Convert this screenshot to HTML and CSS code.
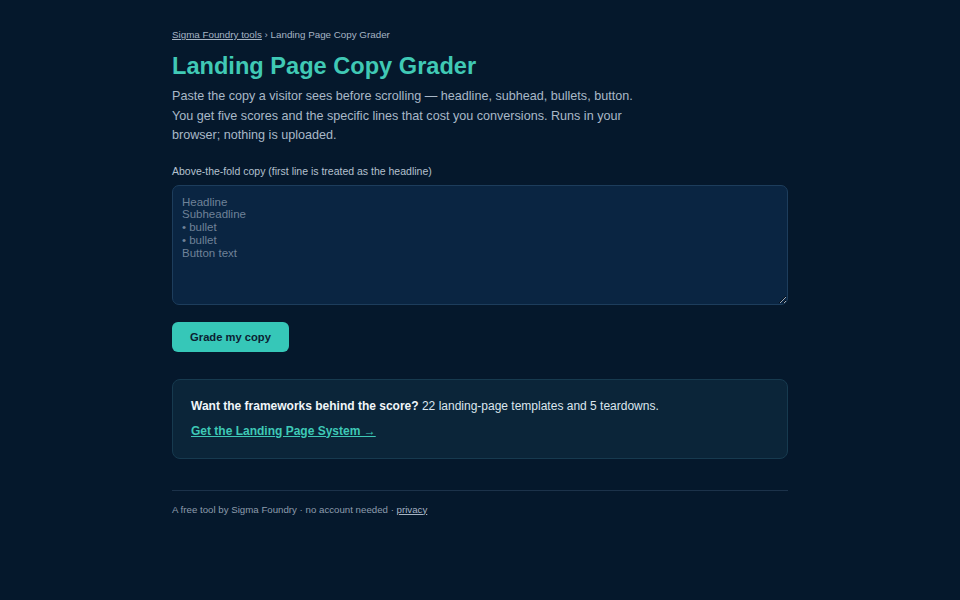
FILE: index.html
```html
<!DOCTYPE html>
<html lang="en">
<head>
<meta charset="utf-8">
<title>Landing Page Copy Grader</title>
<link rel="stylesheet" href="styles.css">
</head>
<body>
<main class="wrap">
  <nav class="crumbs"><a href="#">Sigma Foundry tools</a> › Landing Page Copy Grader</nav>
  <h1 class="title">Landing Page Copy Grader</h1>
  <p class="intro">Paste the copy a visitor sees before scrolling — headline, subhead, bullets, button. You get five scores and the specific lines that cost you conversions. Runs in your browser; nothing is uploaded.</p>
  <label class="label" for="copy">Above-the-fold copy (first line is treated as the headline)</label>
  <textarea id="copy" class="input" placeholder="Headline&#10;Subheadline&#10;• bullet&#10;• bullet&#10;Button text"></textarea>
  <button class="btn" type="button">Grade my copy</button>
  <section class="card">
    <p class="card-text"><strong>Want the frameworks behind the score?</strong> 22 landing-page templates and 5 teardowns.</p>
    <a class="card-link" href="#">Get the Landing Page System →</a>
  </section>
  <footer class="foot">A free tool by Sigma Foundry · no account needed · <a href="#">privacy</a></footer>
</main>
</body>
</html>
```
FILE: styles.css
```css
* { box-sizing: border-box; }
html, body { margin: 0; padding: 0; }
body {
  background: #05182c;
  color: #c9d6e3;
  font-family: "Liberation Sans", Arial, sans-serif;
}
.wrap {
  width: 616px;
  margin: 0 auto;
  padding-top: 28px;
  display: flex;
  flex-direction: column;
  align-items: flex-start;
}
.crumbs {
  font-size: 9.8px;
  color: #a6b4c4;
  line-height: 13px;
}
.crumbs a { color: #a6b4c4; }
.title {
  margin: 10px 0 0;
  font-size: 23.6px;
  line-height: 30px;
  color: #40c9b5;
  font-weight: bold;
}
.intro {
  margin: 6px 0 0;
  max-width: 480px;
  font-size: 12.6px;
  line-height: 19.5px;
  color: #a9b8c8;
}
.label {
  margin-top: 19px;
  font-size: 10.5px;
  line-height: 13px;
  color: #b4c1cf;
}
.input {
  margin-top: 7px;
  width: 100%;
  height: 120px;
  padding: 10px 9px;
  background: #0a2542;
  border: 1px solid #1d3d5c;
  border-radius: 7px;
  color: #c9d6e3;
  font-family: "Liberation Sans", Arial, sans-serif;
  font-size: 11.5px;
  line-height: 12.8px;
  resize: vertical;
}
.input::placeholder { color: #6f8298; }
.btn {
  margin-top: 17px;
  width: 117px;
  height: 30px;
  border: 0;
  border-radius: 6px;
  background: #36c7b8;
  color: #0b2132;
  font-family: "Liberation Sans", Arial, sans-serif;
  font-weight: bold;
  font-size: 11.2px;
  cursor: pointer;
}
.card {
  margin-top: 27px;
  width: 100%;
  padding: 19px 18px 19px;
  background: #0b2539;
  border: 1px solid #173a4f;
  border-radius: 8px;
}
.card-text {
  margin: 0;
  font-size: 12px;
  line-height: 15px;
  color: #dce6ee;
}
.card-text strong { color: #f1f6fa; }
.card-link {
  display: inline-block;
  margin-top: 10px;
  font-size: 12px;
  line-height: 15px;
  font-weight: bold;
  color: #3ec9b6;
}
.foot {
  margin-top: 31px;
  width: 100%;
  padding-top: 13px;
  border-top: 1px solid #1c324a;
  font-size: 9.7px;
  line-height: 12px;
  color: #8d9cad;
}
.foot a { color: #a6b4c4; }
```
